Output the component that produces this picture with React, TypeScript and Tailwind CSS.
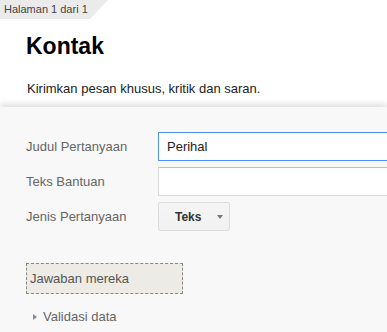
import React from "react";

export default function App() {
  return (
    <div className="w-[387px] h-[332px] overflow-hidden bg-white font-['Liberation_Sans',Arial,sans-serif] relative">
      {/* tab */}
      <div className="h-[19px] w-[108px] bg-[#ebebeb] [clip-path:polygon(0_0,108px_0,90px_100%,0_100%)] flex items-center pl-[4px]">
        <span className="text-[11px] leading-none text-[#444] whitespace-nowrap">Halaman 1 dari 1</span>
      </div>
      <div className="pl-[26px]">
        <h1 className="mt-[13px] text-[23px] leading-[28px] font-bold text-black">Kontak</h1>
        <p className="mt-[21px] text-[13px] leading-[16px] text-[#222] pl-[1px]">Kirimkan pesan khusus, kritik dan saran.</p>
      </div>
      <div className="mt-[10px] h-[300px] bg-[#f8f8f8] shadow-[0_-3px_6px_rgba(0,0,0,0.13)] pl-[26px] pt-[25px]">
        <div className="grid grid-cols-[132px_1fr] gap-y-[6px] items-center text-[13px]">
          <div className="text-[#666]">Judul Pertanyaan</div>
          <div className="h-[29px] w-[300px] border border-[#4d90fe] bg-white flex items-center pl-[8px] text-[#222]">Perihal</div>
          <div className="text-[#666]">Teks Bantuan</div>
          <div className="h-[29px] w-[300px] border border-[#d9d9d9] border-t-[#c0c0c0] bg-white"></div>
          <div className="text-[#666]">Jenis Pertanyaan</div>
          <div>
            <div className="h-[29px] w-[72px] border border-[#dcdcdc] rounded-[2px] bg-gradient-to-b from-[#f5f5f5] to-[#f1f1f1] flex items-center pl-[16px]">
              <span className="text-[12px] font-bold text-[#333]">Teks</span>
              <span className="ml-[16px] w-0 h-0 border-l-[3px] border-r-[3px] border-t-[4px] border-l-transparent border-r-transparent border-t-[#777]"></span>
            </div>
          </div>
        </div>
        <div className="mt-[32px] w-[157px] h-[31px] border border-dashed border-[#888] bg-[#ecebe5] flex items-center pl-[3px] text-[13px] text-[#555]">
          Jawaban mereka
        </div>
        <div className="mt-[15px] flex items-center pl-[7px] text-[13px] leading-[16px] text-[#666]">
          <span className="w-0 h-0 border-t-[3px] border-b-[3px] border-l-[4px] border-t-transparent border-b-transparent border-l-[#888]"></span>
          <span className="ml-[6px]">Validasi data</span>
        </div>
      </div>
    </div>
  );
}
